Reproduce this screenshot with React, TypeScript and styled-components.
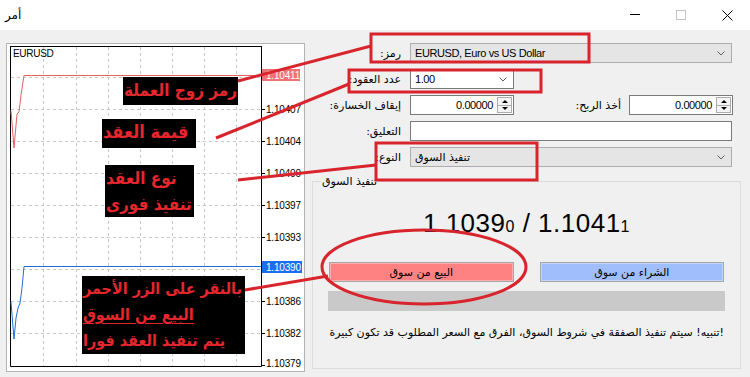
import React from "react"
import styled, { createGlobalStyle } from "styled-components"

const GlobalStyle = createGlobalStyle`
	html, body {
		margin: 0;
		padding: 0;
		background: #f0f0f0;
	}
	body {
		font-family: "Liberation Sans", "DejaVu Sans", sans-serif;
		font-size: 11px;
		color: #000;
	}
`

const Window = styled.div`
	position: relative;
	width: 750px;
	height: 377px;
	overflow: hidden;
	display: flex;
	flex-direction: column;
	background: #f0f0f0;
`

const TitleBar = styled.div`
	height: 30px;
	flex-shrink: 0;
	background: #fff;
	display: flex;
	align-items: center;
	padding-left: 5px;
`

const Title = styled.div`
	flex: 1;
	font-family: "DejaVu Sans", sans-serif;
	font-size: 12px;
`

const CaptionButton = styled.div`
	width: 46px;
	height: 30px;
	display: flex;
	align-items: center;
	justify-content: center;
`

const Body = styled.div`
	flex: 1;
	display: flex;
`

const ChartFrame = styled.div`
	position: relative;
	box-sizing: border-box;
	margin: 13px 0 0 6px;
	width: 299px;
	height: 329px;
	border: 1px solid #b4b4b4;
	background: #fff;
	flex-shrink: 0;
`

const ChartSvg = styled.svg`
	display: block;
`

const Note = styled.div<{ $left: number; $top: number; $w: number; $h: number; $size?: number }>`
	position: absolute;
	left: ${(p) => p.$left}px;
	top: ${(p) => p.$top}px;
	width: ${(p) => p.$w}px;
	height: ${(p) => p.$h}px;
	background: #000;
	color: #e5262c;
	font-family: "DejaVu Sans Condensed", "DejaVu Sans", sans-serif;
	font-weight: bold;
	font-size: ${(p) => p.$size ?? 17}px;
	line-height: 26px;
	white-space: nowrap;
	direction: rtl;
	text-align: left;
	padding-left: 1px;
	box-sizing: border-box;
`

const NoteLine = styled.div<{ $underline?: boolean }>`
	text-decoration: ${(p) => (p.$underline ? "underline" : "none")};
	text-underline-offset: 3px;
`

const FormPanel = styled.div`
	flex: 1;
	display: flex;
	flex-direction: column;
	padding-top: 10px;
`

const Row = styled.div`
	height: 26px;
	display: flex;
	align-items: center;
	padding-right: 17px;
`

const Label = styled.div<{ $w?: number }>`
	width: ${(p) => (p.$w ? `${p.$w}px` : "auto")};
	flex: ${(p) => (p.$w ? "0 0 auto" : "1")};
	margin-right: ${(p) => (p.$w ? 9 : 8)}px;
	direction: rtl;
	text-align: right;
	font-family: "DejaVu Sans", sans-serif;
	font-size: 11px;
	white-space: nowrap;
`

const Field = styled.div<{ $w: number; $grey?: boolean }>`
	box-sizing: border-box;
	width: ${(p) => p.$w}px;
	height: 20px;
	display: flex;
	align-items: center;
	background: ${(p) => (p.$grey ? "#e5e5e5" : "#fff")};
	border: 1px solid ${(p) => (p.$grey ? "#adadad" : "#7a7a7a")};
`

const FieldText = styled.div<{ $right?: boolean; $arabic?: boolean }>`
	flex: 1;
	padding: 0 4px;
	text-align: ${(p) => (p.$right ? "right" : "left")};
	font-family: ${(p) => (p.$arabic ? `"DejaVu Sans", sans-serif` : `"Liberation Sans", sans-serif`)};
	font-size: 11px;
	letter-spacing: ${(p) => (p.$arabic ? "0" : "-0.4px")};
	white-space: nowrap;
`

const Chevron = styled.svg`
	margin-right: 6px;
	flex-shrink: 0;
`

const Spinner = styled.div`
	box-sizing: border-box;
	width: 15px;
	height: 16px;
	margin-right: 1px;
	border: 1px solid #adadad;
	background: #f4f4f4;
	display: flex;
	flex-direction: column;
`

const SpinHalf = styled.div<{ $down?: boolean }>`
	flex: 1;
	display: flex;
	align-items: center;
	justify-content: center;
	border-top: ${(p) => (p.$down ? "1px solid #adadad" : "none")};

	&::after {
		content: "";
		border-left: 3px solid transparent;
		border-right: 3px solid transparent;
		${(p) => (p.$down ? "border-top: 3px solid #000;" : "border-bottom: 3px solid #000;")}
	}
`

const Group = styled.fieldset`
	box-sizing: border-box;
	margin: 5px 9px 0 7px;
	height: 194px;
	padding: 0 16px;
	border: 1px solid #dcdcdc;
	min-inline-size: 0;
	display: flex;
	flex-direction: column;
`

const Legend = styled.legend`
	margin-left: -8px;
	padding: 0 1px;
	font-family: "DejaVu Sans", sans-serif;
	font-size: 11px;
	line-height: 13px;
`

const Price = styled.div`
	margin-top: 20px;
	text-align: center;
	font-family: "Liberation Sans", sans-serif;
	font-size: 26px;
	line-height: 30px;
	letter-spacing: 0.5px;
`

const Pip = styled.span`
	font-size: 16px;
`

const Buttons = styled.div`
	margin-top: 20px;
	display: flex;
	gap: 26px;
`

const TradeButton = styled.div<{ $color: string }>`
	flex: 1;
	box-sizing: border-box;
	height: 20px;
	display: flex;
	align-items: center;
	justify-content: center;
	background: ${(p) => p.$color};
	border: 1px solid #a6a6a6;
	box-shadow: inset 0 0 0 1px rgba(255, 255, 255, 0.35);
	font-family: "DejaVu Sans", sans-serif;
	font-size: 11px;
	direction: rtl;
`

const Bar = styled.div`
	margin: 9px -1px 0;
	height: 20px;
	background: #c9c9c9;
`

const Warning = styled.div`
	margin-top: 15px;
	text-align: right;
	font-family: "DejaVu Sans", sans-serif;
	font-size: 11px;
	line-height: 14px;
	white-space: nowrap;
	direction: rtl;
`

const Markup = styled.svg`
	position: absolute;
	left: 0;
	top: 0;
	pointer-events: none;
`

const gridY = [77, 109, 141, 173, 205, 237, 269, 301, 333]
const gridX = [43, 76, 108, 140, 172, 204, 236]
const axis: [number, string][] = [
	[109, "1.10407"],
	[141, "1.10404"],
	[173, "1.10400"],
	[205, "1.10397"],
	[237, "1.10393"],
	[301, "1.10386"],
	[333, "1.10382"],
	[363, "1.10379"],
]

const ChevronIcon = () => (
	<Chevron width="8" height="5" viewBox="0 0 8 5">
		<polyline points="0.5,0.5 4,4 7.5,0.5" fill="none" stroke="#606060" strokeWidth="1" />
	</Chevron>
)

const SpinBox = () => (
	<Spinner>
		<SpinHalf />
		<SpinHalf $down />
	</Spinner>
)

const Chart = () => (
	<ChartSvg width="297" height="327" viewBox="0 0 297 327">
		<g transform="translate(-7,-44)">
			{gridY.map((y) => (
				<line key={"h" + y} x1="11" x2="261" y1={y + 0.5} y2={y + 0.5} stroke="#c8c8c8" strokeDasharray="3 3" />
			))}
			{gridX.map((x) => (
				<line key={"v" + x} x1={x + 0.5} x2={x + 0.5} y1="47" y2="366" stroke="#c8c8c8" strokeDasharray="3 3" />
			))}
			<path d="M10.5,46 V366.5 H261.5 V46" fill="none" stroke="#000" />
			<line x1="10" x2="262" y1="46.5" y2="46.5" stroke="#000" />
			{gridY.concat([365]).map((y) => (
				<line key={"t" + y} x1="261" x2="265" y1={y + 0.5} y2={y + 0.5} stroke="#000" />
			))}
			<text x="13" y="57" fontFamily="Liberation Sans, sans-serif" fontSize="10" letterSpacing="-0.3">
				EURUSD
			</text>
			<polyline points="11,111 14,148 17,114 19,112 21,95 24,75.5 261,75.5" fill="none" stroke="#e06464" />
			<polyline points="11,302 14,339 16,318 18,308 20,303 22,288 24,266.5 261,266.5" fill="none" stroke="#1f6fd0" />
			{axis.map(([y, t]) => (
				<text key={t} x="266" y={y + 3.5} fontFamily="Liberation Sans, sans-serif" fontSize="10" letterSpacing="-0.2">
					{t}
				</text>
			))}
			<rect x="262" y="69" width="38" height="12" fill="#f07272" />
			<text x="266" y="78.5" fill="#fff" fontFamily="Liberation Sans, sans-serif" fontSize="10" letterSpacing="-0.2">
				1.10411
			</text>
			<rect x="262" y="261" width="40" height="12" fill="#1a6ff0" />
			<text x="266" y="270.5" fill="#fff" fontFamily="Liberation Sans, sans-serif" fontSize="10" letterSpacing="-0.2">
				1.10390
			</text>
		</g>
	</ChartSvg>
)

export default function App() {
	return (
		<>
			<GlobalStyle />
			<Window>
				<TitleBar>
					<Title>أمر</Title>
					<CaptionButton>
						<svg width="10" height="10" viewBox="0 0 10 10">
							<line x1="0" x2="10" y1="4.5" y2="4.5" stroke="#000" />
						</svg>
					</CaptionButton>
					<CaptionButton>
						<svg width="10" height="10" viewBox="0 0 10 10">
							<rect x="0.5" y="0.5" width="9" height="9" fill="none" stroke="#c4c4c4" />
						</svg>
					</CaptionButton>
					<CaptionButton>
						<svg width="11" height="11" viewBox="0 0 11 11">
							<path d="M0.5,0.5 L10.5,10.5 M10.5,0.5 L0.5,10.5" stroke="#000" />
						</svg>
					</CaptionButton>
				</TitleBar>
				<Body>
					<ChartFrame>
						<Chart />
						<Note $left={116} $top={33} $w={115} $h={28}>
							رمز زوج العملة
						</Note>
						<Note $left={95} $top={75} $w={94} $h={29} $size={18}>
							قيمة العقد
						</Note>
						<Note $left={98} $top={121} $w={89} $h={52}>
							<NoteLine>نوع العقد</NoteLine>
							<NoteLine>تنفيذ فورى</NoteLine>
						</Note>
						<Note $left={75} $top={232} $w={163} $h={78} $size={16}>
							<NoteLine>بالنقر على الزر الأحمر</NoteLine>
							<NoteLine $underline>البيع من السوق</NoteLine>
							<NoteLine>يتم تنفيذ العقد فورا</NoteLine>
						</Note>
					</ChartFrame>
					<FormPanel>
						<Row>
							<Label $w={96}>رمز:</Label>
							<Field $w={322} $grey>
								<FieldText>EURUSD, Euro vs US Dollar</FieldText>
								<ChevronIcon />
							</Field>
						</Row>
						<Row>
							<Label $w={96}>عدد العقود:</Label>
							<Field $w={104}>
								<FieldText>1.00</FieldText>
								<ChevronIcon />
							</Field>
						</Row>
						<Row>
							<Label $w={96}>إيقاف الخسارة:</Label>
							<Field $w={104}>
								<FieldText $right>0.00000</FieldText>
								<SpinBox />
							</Field>
							<Label>أخذ الربح:</Label>
							<Field $w={104}>
								<FieldText $right>0.00000</FieldText>
								<SpinBox />
							</Field>
						</Row>
						<Row>
							<Label $w={96}>التعليق:</Label>
							<Field $w={322} />
						</Row>
						<Row>
							<Label $w={96}>النوع:</Label>
							<Field $w={322} $grey>
								<FieldText $arabic>تنفيذ السوق</FieldText>
								<ChevronIcon />
							</Field>
						</Row>
						<Group>
							<Legend>تنفيذ السوق</Legend>
							<Price>
								1.1039<Pip>0</Pip> / 1.1041<Pip>1</Pip>
							</Price>
							<Buttons>
								<TradeButton $color="#ff8282">البيع من سوق</TradeButton>
								<TradeButton $color="#a1befc">الشراء من سوق</TradeButton>
							</Buttons>
							<Bar />
							<Warning>!تنبيه! سيتم تنفيذ الصفقة في شروط السوق، الفرق مع السعر المطلوب قد تكون كبيرة</Warning>
						</Group>
					</FormPanel>
				</Body>
				<Markup width="750" height="377" viewBox="0 0 750 377">
					<g fill="none" stroke="#d8242c" strokeWidth="3">
						<rect x="371" y="34" width="218" height="28" />
						<rect x="349" y="70" width="192" height="22" />
						<rect x="376" y="143" width="161" height="37" />
						<ellipse cx="424" cy="267" rx="102" ry="37" />
						<line x1="238" y1="81" x2="371" y2="46" />
						<line x1="216" y1="138" x2="349" y2="84" />
						<line x1="238" y1="180" x2="376" y2="165" />
						<line x1="245" y1="290" x2="328" y2="276" />
					</g>
				</Markup>
			</Window>
		</>
	)
}
